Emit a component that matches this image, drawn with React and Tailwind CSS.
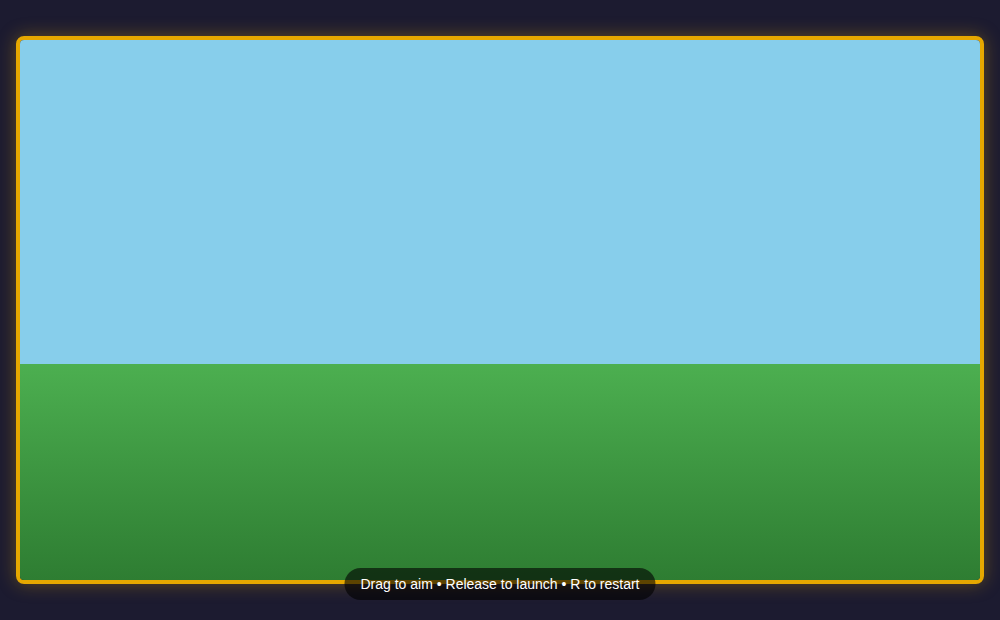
export default function App() {
  return (
    <div className="w-[1000px] h-[620px] bg-[#1c1b30] flex items-center justify-center" style={{ fontFamily: '"Liberation Sans", Arial, sans-serif' }}>
      <div className="relative w-[968px] h-[548px] border-4 border-[#e6a800] rounded-[8px] shadow-[0_0_18px_rgba(230,168,0,0.35)]">
        <div className="w-full h-full flex flex-col overflow-hidden rounded-[4px]">
          <div className="h-[324px] bg-[#87ceeb]" />
          <div className="flex-1 bg-gradient-to-b from-[#4caf50] to-[#2e7d32]" />
        </div>
        <div className="absolute left-1/2 -translate-x-1/2 bottom-[-20px] h-[32px] px-4 rounded-full bg-black/60 flex items-center text-white text-[14px] whitespace-nowrap">
          Drag to aim • Release to launch • R to restart
        </div>
      </div>
    </div>
  );
}
